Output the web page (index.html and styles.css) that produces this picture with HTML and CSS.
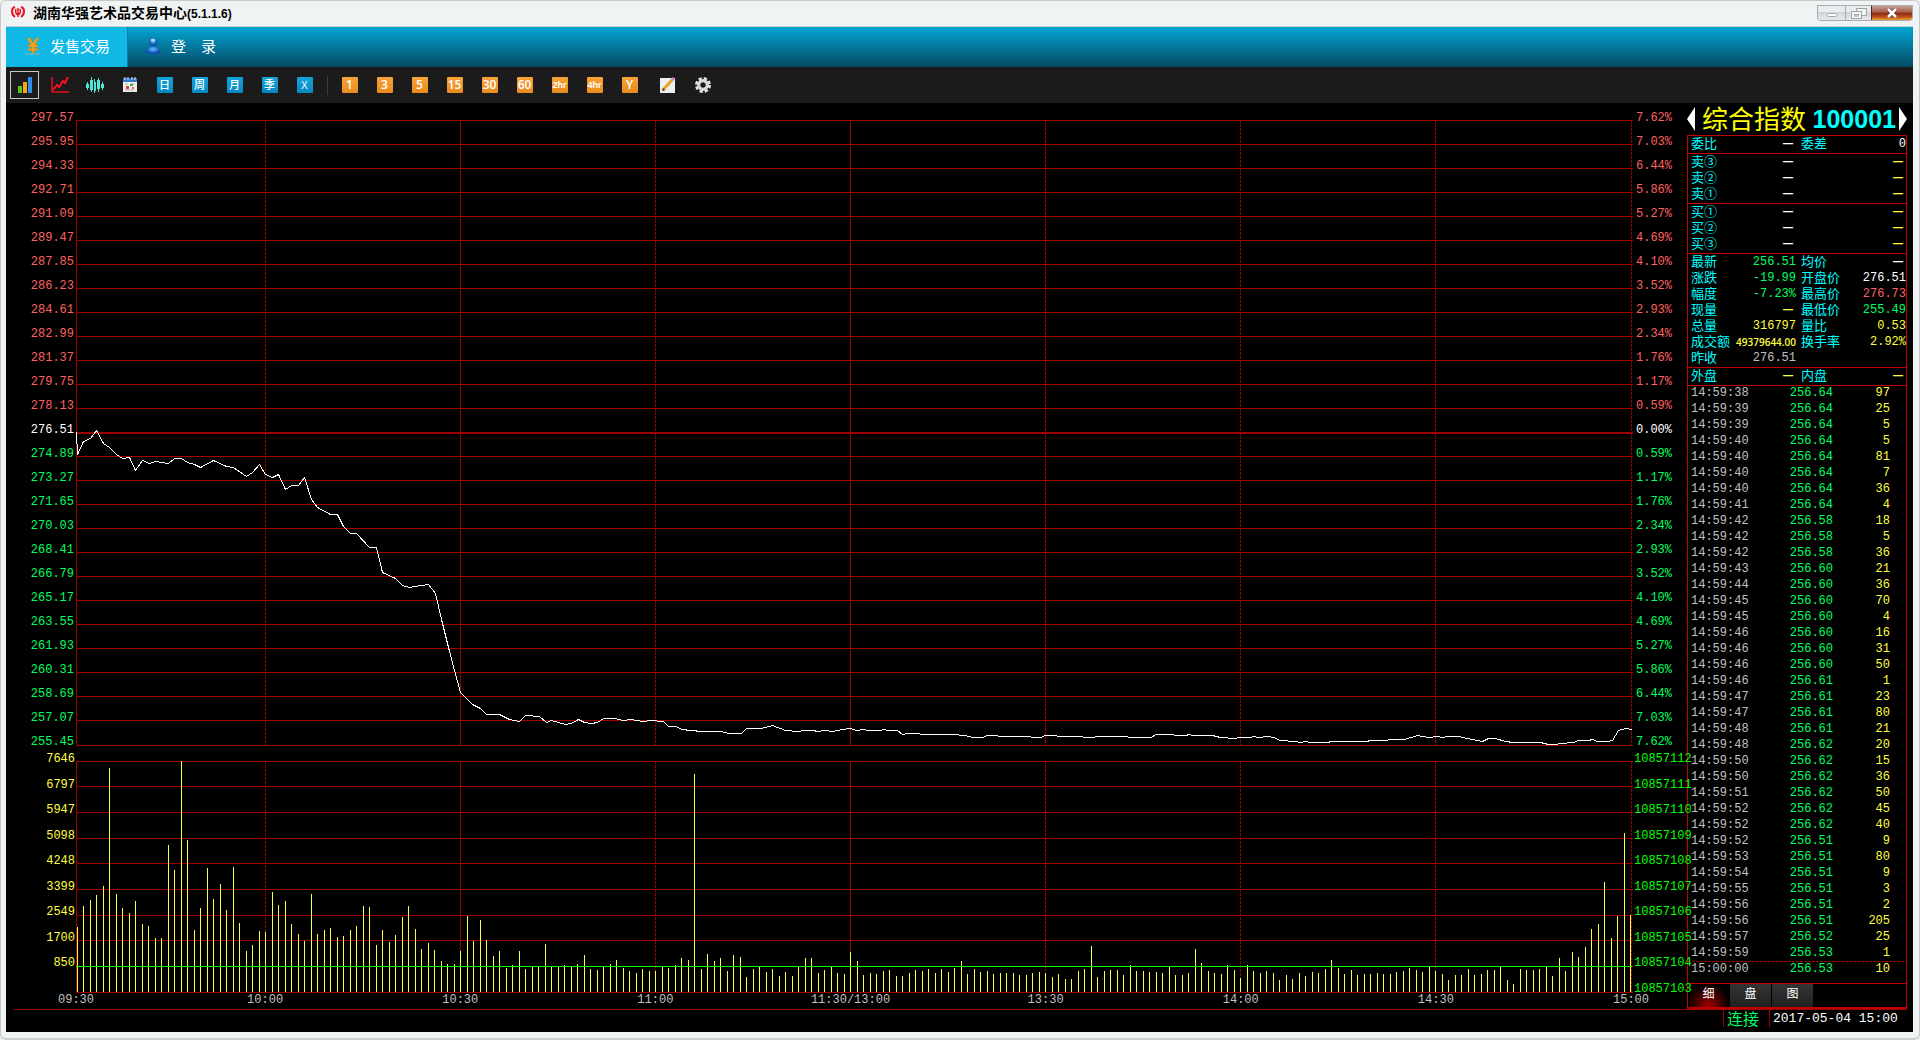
FILE: index.html
```html
<!DOCTYPE html>
<html lang="zh-CN">
<head>
<meta charset="utf-8">
<title>湖南华强艺术品交易中心(5.1.1.6)</title>
<link rel="stylesheet" href="styles.css">
</head>
<body>
<div class="window">
  <header class="titlebar">
    <svg class="app-logo" viewBox="0 0 16 14" aria-hidden="true">
      <g fill="none" stroke="#e8141c" stroke-width="2"><path d="M5 2C1 3 1 9 5 12M11 2C15 3 15 9 11 12"/><path d="M8 3v9M6 4c-1 3 0 5 2 6M10 4c1 3 0 5-2 6" stroke-width="1.500"/></g>
    </svg>
    <h1 class="app-title">湖南华强艺术品交易中心<span class="version">(5.1.1.6)</span></h1>
    <div class="window-controls">
      <button class="ctl ctl-min" aria-label="最小化"><svg width="12" height="6" viewBox="0 0 12 6"><rect x="1.5" y="1.500" width="9" height="3" rx="1" fill="#fff" stroke="#a0a5aa"/></svg></button>
      <button class="ctl ctl-restore" aria-label="还原"><svg width="18" height="13" viewBox="0 0 18 13"><g fill="#f4f6f7" stroke="#a0a5aa"><rect x="6.5" y="1.500" width="10" height="7"/><rect x="1.500" y="4.500" width="10" height="7"/><rect x="4.500" y="7.500" width="4" height="1.500"/></g></svg></button>
      <button class="ctl ctl-close" aria-label="关闭"><svg width="12" height="10" viewBox="0 0 12 10"><path d="M2 1l8 8M10 1L2 9" stroke="#6b3a34" stroke-width="4"/><path d="M2 1l8 8M10 1L2 9" stroke="#fff" stroke-width="2.500"/></svg></button>
    </div>
  </header>

  <nav class="menu">
    <button class="menu-item active">
      <svg width="18" height="18" viewBox="0 0 18 18" aria-hidden="true"><path d="M3 1h3l3 5 3-5h3l-4 7h3v2h-4v1.500h4v2h-4V16H8v-2.500H4v-2h4V10H4V8h3z" fill="#f5a21b" stroke="#c9820f" stroke-width=".5"/><path d="M1 17h16" stroke="#8fb6b0"/></svg>
      发售交易
    </button>
    <button class="menu-item">
      <svg width="16" height="18" viewBox="0 0 16 18" aria-hidden="true"><defs><radialGradient id="body" cx=".5" cy=".4"><stop offset="0" stop-color="#5fc4ff"/><stop offset="1" stop-color="#0a48b0"/></radialGradient></defs><path d="M1 15c0-4 3-6 7-6s7 2 7 6c-2 3-12 3-14 0z" fill="url(#body)"/><circle cx="8" cy="5" r="4" fill="url(#body)"/><ellipse cx="8" cy="3" rx="2.500" ry="1.500" fill="#bfe8ff" opacity=".8"/></svg>
      登　录
    </button>
  </nav>

  <div class="toolbar">
    <button class="tool selected" aria-label="分时"><svg width="18" height="18" viewBox="0 0 18 18"><rect x="2" y="10" width="4" height="7" fill="#5fc413"/><rect x="7" y="6" width="4" height="11" fill="#f7a51c"/><rect x="12" y="1" width="4" height="16" fill="#2c8ff0"/></svg></button>
    <button class="tool" aria-label="走势"><svg width="20" height="18" viewBox="0 0 20 18"><path d="M2 1v15h17" fill="none" stroke="#e60f1e" stroke-width="1.500"/><path d="M3 14l4-5 2 2 4-6 2 2 3-6" fill="none" stroke="#ff1020" stroke-width="2"/></svg></button>
    <button class="tool" aria-label="K线"><svg width="18" height="18" viewBox="0 0 18 18"><g fill="#4fe8d2"><rect x="0" y="8" width="3" height="4"/><rect x="1" y="6" width="1" height="8"/><rect x="4" y="4" width="3" height="10"/><rect x="5" y="1" width="1" height="15"/><rect x="8" y="6" width="2" height="9"/><rect x="8" y="3" width="1" height="14"/><rect x="11" y="4" width="3" height="9"/><rect x="12" y="2" width="1" height="14"/><rect x="15" y="8" width="3" height="4"/><rect x="16" y="6" width="1" height="8"/></g></svg></button>
    <button class="tool" aria-label="日历"><svg width="16" height="16" viewBox="0 0 16 16"><rect x="1" y="1" width="14" height="14" fill="#efefec"/><rect x="1" y="1" width="14" height="4" fill="#3577c8"/><path d="M3 0v3M6 0v3M10 0v3M13 0v3" stroke="#d8e4f0"/><path d="M3 7h3M8 7h5M3 13h9" stroke="#c4c4c4" stroke-width="1.500"/><rect x="4" y="9" width="3" height="3" fill="#d44"/><rect x="8" y="7" width="3" height="2" fill="#4a4"/><rect x="10" y="10" width="2" height="2" fill="#e07030"/></svg></button>
    <button class="tool"><span class="tile blue">日</span></button>
    <button class="tool"><span class="tile blue">周</span></button>
    <button class="tool"><span class="tile blue">月</span></button>
    <button class="tool"><span class="tile blue">季</span></button>
    <button class="tool"><span class="tile blue">X</span></button>
    <span class="tool-divider"></span>
    <button class="tool"><span class="tile orange">1</span></button>
    <button class="tool"><span class="tile orange">3</span></button>
    <button class="tool"><span class="tile orange">5</span></button>
    <button class="tool"><span class="tile orange">15</span></button>
    <button class="tool"><span class="tile orange">30</span></button>
    <button class="tool"><span class="tile orange">60</span></button>
    <button class="tool"><span class="tile orange small">2hr</span></button>
    <button class="tool"><span class="tile orange small">4hr</span></button>
    <button class="tool"><span class="tile orange">Y</span></button>
    <button class="tool tool-edit" aria-label="画线"><svg width="16" height="16" viewBox="0 0 16 16"><rect x="0" y="1" width="15" height="15" fill="#eceeef"/><path d="M3 13L12 3" stroke="#e9a020" stroke-width="3"/><path d="M2 14l1-3 2 2z" fill="#333"/><path d="M12 3l2-2" stroke="#d77cc0" stroke-width="3"/></svg></button>
    <button class="tool" aria-label="设置"><svg width="16" height="16" viewBox="0 0 16 16"><circle cx="8" cy="8" r="6.500" fill="none" stroke="#e0e2e6" stroke-width="3" stroke-dasharray="3.100 2"/><circle cx="8" cy="8" r="4.200" fill="none" stroke="#d4d7dc" stroke-width="3.400"/><circle cx="8" cy="8" r="2.500" fill="#1b1b1b"/></svg></button>
  </div>

  <main class="workspace">
    <section class="chart" aria-label="分时走势图">
      <ol class="axis axis-left" id="price-labels"></ol>
      <svg class="plot" id="price-plot" viewBox="0 0 1557 626" preserveAspectRatio="none"></svg>
      <ol class="axis axis-right" id="percent-labels"></ol>
      <ol class="axis axis-left axis-volume" id="volume-labels"></ol>
      <svg class="plot plot-volume" id="volume-plot" viewBox="0 0 1557 232" preserveAspectRatio="none"></svg>
      <ol class="axis axis-right axis-interest" id="interest-labels"></ol>
      <ol class="axis-time">
        <li><span>09:30</span></li><li><span>10:00</span></li><li><span>10:30</span></li><li><span>11:00</span></li><li><span>11:30/13:00</span></li><li><span>13:30</span></li><li><span>14:00</span></li><li><span>14:30</span></li><li><span>15:00</span></li>
      </ol>
    </section>

    <aside class="panel">
      <div class="panel-title">
        <button class="arrow" aria-label="上一个"><svg width="8" height="24" viewBox="0 0 8 24"><path d="M8 0v24L0 12z" fill="#fff"/></svg></button>
        <h2 class="name">综合指数</h2>
        <span class="code">100001</span>
        <button class="arrow" aria-label="下一个"><svg width="8" height="24" viewBox="0 0 8 24"><path d="M0 0v24l8-12z" fill="#fff"/></svg></button>
      </div>
      <div class="panel-box">
        <table class="quote">
          <tr><th>委比</th><td class="white"><i>—</i></td><th>委差</th><td class="white">0</td></tr>
        </table>
        <table class="quote">
          <tr><th>卖③</th><td class="white"><i>—</i></td><th></th><td class="yellow"><i>—</i></td></tr>
          <tr><th>卖②</th><td class="white"><i>—</i></td><th></th><td class="yellow"><i>—</i></td></tr>
          <tr><th>卖①</th><td class="white"><i>—</i></td><th></th><td class="yellow"><i>—</i></td></tr>
        </table>
        <table class="quote">
          <tr><th>买①</th><td class="white"><i>—</i></td><th></th><td class="yellow"><i>—</i></td></tr>
          <tr><th>买②</th><td class="white"><i>—</i></td><th></th><td class="yellow"><i>—</i></td></tr>
          <tr><th>买③</th><td class="white"><i>—</i></td><th></th><td class="yellow"><i>—</i></td></tr>
        </table>
        <table class="quote">
          <tr><th>最新</th><td class="green">256.51</td><th>均价</th><td class="white"><i>—</i></td></tr>
          <tr><th>涨跌</th><td class="green">-19.99</td><th>开盘价</th><td class="white">276.51</td></tr>
          <tr><th>幅度</th><td class="green">-7.23%</td><th>最高价</th><td class="red">276.73</td></tr>
          <tr><th>现量</th><td class="yellow"><i>—</i></td><th>最低价</th><td class="green">255.49</td></tr>
          <tr><th>总量</th><td class="yellow">316797</td><th>量比</th><td class="yellow">0.53</td></tr>
          <tr><th>成交额</th><td class="yellow amount">49379644.00</td><th>换手率</th><td class="yellow">2.92%</td></tr>
          <tr><th>昨收</th><td class="grey">276.51</td><th></th><td></td></tr>
        </table>
        <table class="quote">
          <tr><th>外盘</th><td class="yellow"><i>—</i></td><th>内盘</th><td class="yellow"><i>—</i></td></tr>
        </table>
        <div class="trades-wrap"><table class="trades"><tbody id="trades"></tbody></table></div>
        <div class="tabs">
          <button class="tab active">细</button>
          <button class="tab">盘</button>
          <button class="tab">图</button>
        </div>
      </div>
    </aside>
  </main>

  <footer class="status">
    <span class="link-state">连接</span>
    <time class="clock">2017-05-04 15:00</time>
  </footer>
</div>
<script src="script.js"></script>
</body>
</html>
```
FILE: styles.css
```css
:root {
  --grid: #a00000;
  --border: #c00000;
  --cjk: "Noto Sans CJK SC", sans-serif;
  --mono: "Liberation Mono", "Noto Sans CJK SC", monospace;
}

* { box-sizing: border-box; }

body { margin: 0; background: #f0f0f0; font-family: var(--cjk); }

button { border: 0; padding: 0; margin: 0; background: none; color: inherit; font: inherit; cursor: pointer; }

h1, h2, ol { margin: 0; padding: 0; list-style: none; font-weight: inherit; }

svg { display: block; }

.window {
  display: flex;
  flex-direction: column;
  min-height: 100vh;
  padding: 0 6px 6px 5px;
  background: #f0f3f4;
  border: 1px solid #c8c8c8;
  border-bottom: 2px solid #cfcfcf;
  border-radius: 6px;
}

.titlebar { display: flex; align-items: center; height: 26px; padding-bottom: 3px; border-bottom: 1px solid #d0d0cc; }
.app-logo { width: 16px; height: 14px; margin: 0 7px 0 4px; }
.app-title { flex: 1; font-size: 14px; line-height: 18px; font-weight: 700; color: #000; }
.version { font: 700 12px/16px "Liberation Sans", sans-serif; }

.window-controls { display: flex; align-self: flex-start; margin-top: 4px; height: 16px; border: 1px solid #a6acb0; border-top: 0; border-radius: 0 0 4px 4px; overflow: hidden; }
.ctl { display: flex; align-items: center; justify-content: center; background: linear-gradient(#e9ecee 0 45%, #cfd5d9 46%, #e8ebed); border-top: 1px solid #a6acb0; }
.ctl-min { width: 27px; padding-top: 4px; }
.ctl-restore { width: 26px; border-left: 1px solid #a6acb0; }
.ctl-close { width: 41px; background: linear-gradient(#c8a098, #a85a48 45%, #8a2a18 50%, #b84a18 75%, #e8a030); border-left: 1px solid #5c241c; }

.menu { display: flex; height: 40px; background: linear-gradient(#04a5d2, #034a64); }
.menu-item { display: flex; align-items: center; padding-bottom: 2px; color: #fff; font-size: 15px; line-height: 22px; }
.menu-item.active { width: 122px; padding-left: 18px; gap: 8px; background: #10b8e6; border-right: 1px solid #0a7da8; }
.menu-item + .menu-item { padding-left: 17px; gap: 10px; }

.toolbar { display: flex; align-items: center; gap: 6px; height: 36px; padding-left: 4px; background: #1b1b1b; }
.tool { display: flex; align-items: center; justify-content: center; width: 29px; height: 28px; }
.tool.selected { border: 1px solid #c8c8c8; }
.tool-edit { margin-left: 3px; }
.tool-divider { width: 1px; height: 19px; margin: 0 1px 0 2px; background: #3c3c3c; }
.tile { width: 16px; height: 16px; border-radius: 1px; color: #fff; font: 500 11px/16px "Open Sans", "Noto Sans CJK SC", sans-serif; text-align: center; overflow: hidden; }
.tile.blue { background: linear-gradient(#16a4dc, #0787c0); }
.tile.orange { background: linear-gradient(#f8a238, #e98c1c); font-size: 12px; font-weight: 600; }
.tile.small { font: 700 9px/16px "Liberation Sans", sans-serif; }

.workspace { flex: 1; display: flex; padding-right: 6px; background: #000; }

.chart {
  flex: 1;
  min-width: 0;
  display: grid;
  grid-template-columns: 70px minmax(0, 1fr) 54px;
  grid-template-rows: minmax(0, 626fr) 15px minmax(0, 232fr) 16px;
  padding-top: 17px;
  font: 12px/16px var(--mono);
}
.plot { width: 100%; height: 0; min-height: 100%; }
.plot-volume, .axis-volume, .axis-interest { grid-row: 3; }
.axis { display: flex; flex-direction: column; justify-content: space-between; margin: -10px 0 -4px; }
.axis li { height: 16px; white-space: nowrap; }
.axis-left { text-align: right; padding-right: 2px; }
.axis-right { padding-left: 3px; }
.axis-volume { color: #ffff40; padding-right: 1px; }
.axis-interest { color: #00ff00; padding-left: 1px; z-index: 1; }
.axis-time {
  grid-column: 2;
  grid-row: 4;
  display: grid;
  grid-template-columns: 189fr repeat(7, 195fr) 0;
  margin-right: 2px;
  color: #c0c0c0;
}
.axis-time li { display: flex; justify-content: center; width: 0; line-height: 14px; white-space: nowrap; }

.up { color: #ff6060; }
.down { color: #00ff60; }
.flat { color: #ffffff; }

.grid-line { stroke: var(--grid); stroke-width: 1; shape-rendering: crispEdges; }
.grid-base { stroke-width: 2; }
.grid-dashed { stroke-dasharray: 3 1; }
.price-line { fill: none; stroke: #fff; stroke-width: 1; vector-effect: non-scaling-stroke; shape-rendering: crispEdges; }
.bar { stroke: #ffff40; stroke-width: 1; shape-rendering: crispEdges; }
.interest-line { stroke: #00ff00; stroke-width: 1; shape-rendering: crispEdges; }

.panel { display: flex; flex-direction: column; width: 220px; }
.panel-title { display: flex; align-items: center; height: 32px; }
.name { flex: 1; margin-left: 7px; padding-bottom: 2px; color: #ffff00; font-size: 26px; line-height: 30px; white-space: nowrap; }
.code { margin-right: 3px; color: #00ffff; font: 700 25px/32px "Liberation Sans", sans-serif; }

.panel-box { flex: 1; display: flex; flex-direction: column; border: 1px solid var(--border); border-bottom-width: 2px; }
.quote { width: 100%; table-layout: fixed; border-spacing: 0; border-bottom: 1px solid var(--border); padding-bottom: 1px; }
.quote th, .quote td { height: 16px; padding: 0; white-space: nowrap; vertical-align: top; }
.quote th { width: 45px; padding-left: 5px; text-align: left; color: #00ffff; font-size: 13px; line-height: 14px; font-weight: 400; }
.quote th:first-child { width: 43px; padding-left: 3px; }
.quote td { text-align: right; font: 12px/16px var(--mono); }
.quote i { margin-right: 3px; font: 700 10px/0 "Liberation Sans", sans-serif; }
.quote td.amount { font: 600 10px/16px "Open Sans", sans-serif; }
.white { color: #fff; }
.yellow { color: #ffff40; }
.green { color: #00ff60; }
.red { color: #ff6060; }
.grey { color: #c0c0c0; }

.trades-wrap { flex: 1; border-bottom: 1px solid var(--border); }
.trades { width: 100%; table-layout: fixed; border-spacing: 0; margin-top: -1px; font: 12px/16px var(--mono); }
.trades td { height: 16px; padding: 0; }
.trades td:nth-child(1) { width: 72px; padding-left: 3px; color: #c0c0c0; }
.trades td:nth-child(2) { width: 73px; text-align: right; color: #00ff60; }
.trades td:nth-child(3) { padding-right: 16px; text-align: right; color: #ffff40; }
.trades tr:last-child td { background: repeating-linear-gradient(90deg, var(--grid) 0 3px, transparent 3px 4px) top / 100% 1px no-repeat; }

.tabs { display: flex; gap: 1px; }
.tab { width: 41px; height: 23px; padding-bottom: 5px; color: #fff; font-size: 12px; line-height: 18px; background: linear-gradient(#343434, #202020); }
.tab.active { background: radial-gradient(ellipse 22px 24px at 50% 100%, #a80000, #500000 50%, #000); }

.status { display: flex; justify-content: flex-end; height: 23px; padding: 0 12px 5px 0; background: linear-gradient(var(--grid), var(--grid)) 8px 0 / calc(100% - 14px) 1px no-repeat #000; }
.link-state, .clock { border-left: 1px solid var(--grid); padding-left: 3px; }
.link-state { width: 46px; color: #00ff60; font-size: 16px; line-height: 18px; }
.clock { color: #fff; font: 13px/20px var(--mono); width: 132px; }
```
FILE: script.js
```js
const SVG = "http://www.w3.org/2000/svg";

function draw(parent, name, attrs) {
  const node = document.createElementNS(SVG, name);
  for (const key in attrs) node.setAttribute(key, attrs[key]);
  parent.appendChild(node);
}

function label(list, text, cls) {
  const item = document.createElement("li");
  item.textContent = text;
  if (cls) item.className = cls;
  list.appendChild(item);
}

const byId = (id) => document.getElementById(id);

/* Axis labels */
const BASE = 276.51, STEP = 1.62, ROWS = 26;
for (let i = 0; i <= ROWS; i++) {
  const offset = ROWS / 2 - i;
  const cls = offset > 0 ? "up" : offset < 0 ? "down" : "flat";
  label(byId("price-labels"), (BASE + offset * STEP).toFixed(2), cls);
  label(byId("percent-labels"), (Math.abs(offset) * STEP / BASE * 100).toFixed(2) + "%", cls);
}
[7646, 6797, 5947, 5098, 4248, 3399, 2549, 1700, 850].forEach((v) => label(byId("volume-labels"), v));
label(byId("volume-labels"), "\u00a0");
for (let v = 10857112; v >= 10857103; v--) label(byId("interest-labels"), v);

/* Grid shared by both plots */
function grid(svg, width, height, rows, base) {
  for (let i = 0; i <= rows; i++) {
    const y = Math.floor((height - 1) * i / rows) + 0.5;
    const thick = i === base;
    draw(svg, "line", { x1: 0, x2: width, y1: thick ? y + 0.5 : y, y2: thick ? y + 0.5 : y, class: "grid-line" + (thick ? " grid-base" : "") });
  }
  [0, 189, 384, 579, 774, 969, 1164, 1359, 1555].forEach((x, i) => {
    const solid = i === 0 || i === 2 || i === 4;
    draw(svg, "line", { x1: x + 0.5, x2: x + 0.5, y1: 0, y2: height, class: "grid-line" + (solid ? "" : " grid-dashed") });
  });
}

const pricePlot = byId("price-plot");
grid(pricePlot, 1557, 626, ROWS, ROWS / 2);

const price = [
  0,312, 1,334, 7,321, 14,318, 20,310, 27,323, 33,327, 40,334, 46,338, 53,337, 59,350, 66,340, 73,343, 79,341, 92,343,
  98,338, 105,338, 111,342, 118,344, 124,347, 137,340, 150,346, 157,347, 170,356, 176,352, 183,344, 189,354, 196,357,
  202,354, 209,369, 215,365, 222,365, 228,357, 235,379, 241,387, 254,394, 261,394, 267,406, 274,413, 280,413, 293,427,
  300,427, 306,452, 319,458, 326,465, 333,467, 345,465, 352,464, 359,473, 365,499, 372,527, 378,550, 384,572,
  396,584, 404,588, 410,594, 423,594, 433,599, 443,601, 449,595, 463,596, 470,602, 475,600, 489,604, 495,603, 502,599,
  508,602, 515,603, 521,602, 527,598, 538,598, 547,600, 554,599, 567,601, 574,600, 587,601, 592,606, 600,606, 605,609,
  625,611, 645,611, 652,613, 665,613, 670,608, 685,608, 696,605, 709,610, 722,611, 727,610, 737,610, 741,611, 749,610,
  756,611, 766,609, 774,608, 780,610, 787,609, 792,610, 804,610, 807,609, 812,610, 821,610, 826,614, 832,613, 843,613,
  844,614, 876,614, 889,615, 896,617, 906,617, 911,615, 921,615, 922,616, 954,616, 955,617, 965,617, 968,615, 980,615,
  981,616, 1006,616, 1007,617, 1018,617, 1019,616, 1051,616, 1052,617, 1075,617, 1079,614, 1097,614, 1098,615, 1110,615,
  1112,614, 1117,615, 1136,615, 1144,617, 1158,618, 1163,617, 1174,617, 1177,616, 1182,617, 1191,616, 1197,617,
  1204,620, 1219,621, 1224,622, 1229,621, 1234,622, 1252,622, 1254,621, 1291,621, 1293,620, 1311,620, 1312,619,
  1328,619, 1341,615, 1352,617, 1361,616, 1366,617, 1372,616, 1382,616, 1391,618, 1406,621, 1412,618, 1419,618,
  1429,621, 1437,622, 1464,622, 1472,624, 1479,624, 1484,623, 1497,622, 1502,620, 1512,620, 1516,619, 1521,621,
  1531,621, 1536,620, 1542,610, 1549,608, 1556,609
];
let points = "";
for (let i = 0; i < price.length; i += 2) points += (price[i] + 0.5) + "," + (price[i + 1] + 0.5) + " ";
draw(pricePlot, "polyline", { points: points, class: "price-line" });

/* One volume bar per minute */
const volumePlot = byId("volume-plot");
grid(volumePlot, 1557, 232, 9, -1);
const volume = [
  65,86,92,97,106,224,98,84,79,91,68,66,54,54,147,122,231,152,62,84,124,93,108,82,125,69,41,47,61,60,
  100,87,91,68,58,51,98,58,62,64,55,56,62,66,86,85,47,62,50,57,75,86,63,43,49,42,31,28,28,41,
  76,51,72,52,36,41,24,27,41,23,25,25,48,25,25,27,25,28,37,23,22,25,28,32,24,21,19,23,21,21,
  25,24,27,34,32,218,23,38,31,34,21,37,35,15,23,25,20,23,16,20,16,25,34,34,19,22,25,19,18,40,
  31,17,19,18,21,22,16,16,19,22,21,23,19,23,20,24,31,18,23,20,21,18,19,19,19,17,17,19,20,19,
  15,18,13,13,21,23,46,15,21,22,22,17,27,21,21,20,20,19,25,17,17,19,43,29,21,19,18,27,22,14,
  27,21,19,21,19,12,17,13,19,16,20,19,23,32,24,18,22,17,18,18,19,18,18,20,21,24,22,20,25,21,
  18,12,17,17,23,17,18,22,22,25,12,8,23,22,22,23,25,16,34,21,40,35,45,63,68,110,54,76,159,77
];
volume.forEach((h, i) => {
  const x = Math.floor(i * 6.5 + 1) + 0.5;
  draw(volumePlot, "line", { x1: x, x2: x, y1: 231 - h, y2: 231, class: "bar" });
});
draw(volumePlot, "line", { x1: 0, x2: 1556, y1: 205.5, y2: 205.5, class: "interest-line" });

/* Trade ticks: second, price, lots */
const ticks = [
  ["14:59:38","256.64",97],["14:59:39","256.64",25],["14:59:39","256.64",5],["14:59:40","256.64",5],
  ["14:59:40","256.64",81],["14:59:40","256.64",7],["14:59:40","256.64",36],["14:59:41","256.64",4],
  ["14:59:42","256.58",18],["14:59:42","256.58",5],["14:59:42","256.58",36],["14:59:43","256.60",21],
  ["14:59:44","256.60",36],["14:59:45","256.60",70],["14:59:45","256.60",4],["14:59:46","256.60",16],
  ["14:59:46","256.60",31],["14:59:46","256.60",50],["14:59:46","256.61",1],["14:59:47","256.61",23],
  ["14:59:47","256.61",80],["14:59:48","256.61",21],["14:59:48","256.62",20],["14:59:50","256.62",15],
  ["14:59:50","256.62",36],["14:59:51","256.62",50],["14:59:52","256.62",45],["14:59:52","256.62",40],
  ["14:59:52","256.51",9],["14:59:53","256.51",80],["14:59:54","256.51",9],["14:59:55","256.51",3],
  ["14:59:56","256.51",2],["14:59:56","256.51",205],["14:59:57","256.52",25],["14:59:59","256.53",1],
  ["15:00:00","256.53",10]
];
ticks.forEach((tick) => {
  const row = byId("trades").insertRow();
  tick.forEach((value) => { row.insertCell().textContent = value; });
});
```
